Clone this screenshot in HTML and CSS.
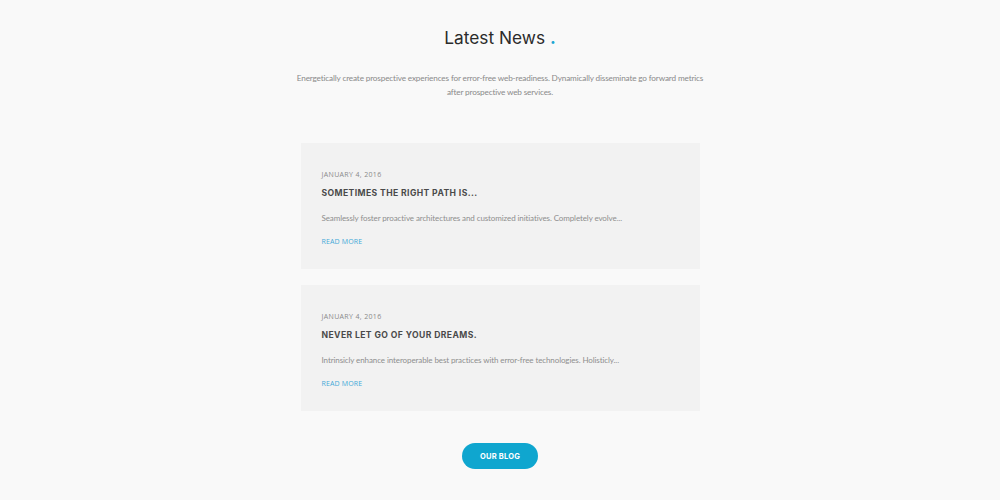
FILE: index.html
```html
<!DOCTYPE html>
<html>
<head>
<meta charset="utf-8">
<link rel="stylesheet" href="styles.css">
</head>
<body>
<section class="news">
  <h2 class="title">Latest News <span class="dot">.</span></h2>
  <p class="intro">Energetically create prospective experiences for error-free web-readiness. Dynamically disseminate go forward metrics<br>after prospective web services.</p>
  <div class="cards">
    <article class="card">
      <div class="date">January 4, 2016</div>
      <h3 class="card-title">Sometimes the right path is...</h3>
      <p class="excerpt">Seamlessly foster proactive architectures and customized initiatives. Completely evolve...</p>
      <a class="more" href="#">Read more</a>
    </article>
    <article class="card">
      <div class="date">January 4, 2016</div>
      <h3 class="card-title">Never let go of your dreams.</h3>
      <p class="excerpt">Intrinsicly enhance interoperable best practices with error-free technologies. Holisticly...</p>
      <a class="more" href="#">Read more</a>
    </article>
  </div>
  <a class="btn" href="#">Our Blog</a>
</section>
</body>
</html>
```
FILE: styles.css
```css
html, body { margin: 0; padding: 0; background: #f9f9f9; }
body { font-family: "Lato", "Open Sans", sans-serif; }
.news {
  display: flex;
  flex-direction: column;
  align-items: center;
  padding-top: 26px;
}
.title {
  margin: 0;
  font-family: "Inter", "Open Sans", sans-serif;
  font-weight: 400;
  font-size: 17.3px;
  line-height: 24px;
  color: #2b2b2b;
}
.dot { color: #1ea6d2; font-weight: 700; }
.intro {
  margin: 21px 0 0;
  font-size: 8.2px;
  letter-spacing: -0.15px;
  line-height: 14px;
  color: #8a8a8a;
  text-align: center;
}
.cards {
  margin-top: 44px;
  display: flex;
  flex-direction: column;
  gap: 16px;
  width: 399px;
}
.card {
  background: #f2f2f2;
  padding: 27px 21px 22px;
  display: flex;
  flex-direction: column;
  align-items: flex-start;
}
.date {
  font-family: "Open Sans", sans-serif;
  font-size: 7px;
  line-height: 10px;
  letter-spacing: 0.35px;
  text-transform: uppercase;
  color: #8a8a8a;
}
.card-title {
  margin: 6px 0 0;
  font-family: "Inter", "Open Sans", sans-serif;
  font-size: 8.6px;
  font-weight: 700;
  line-height: 14px;
  letter-spacing: 0.4px;
  text-transform: uppercase;
  color: #4a4a4a;
}
.excerpt {
  margin: 11px 0 0;
  font-size: 8px;
  letter-spacing: -0.1px;
  line-height: 14px;
  color: #8e8e8e;
}
.more {
  margin-top: 12px;
  font-family: "Open Sans", sans-serif;
  font-size: 7px;
  line-height: 10px;
  letter-spacing: 0.15px;
  text-transform: uppercase;
  color: #3fa9d8;
  text-decoration: none;
}
.btn {
  margin-top: 32px;
  width: 76px;
  height: 26px;
  border-radius: 13px;
  background: #0fa6cf;
  color: #fff;
  font-family: "Inter", "Open Sans", sans-serif;
  font-weight: 700;
  font-size: 7.5px;
  text-transform: uppercase;
  display: flex;
  align-items: center;
  justify-content: center;
  text-decoration: none;
  letter-spacing: 0.2px;
}
```
